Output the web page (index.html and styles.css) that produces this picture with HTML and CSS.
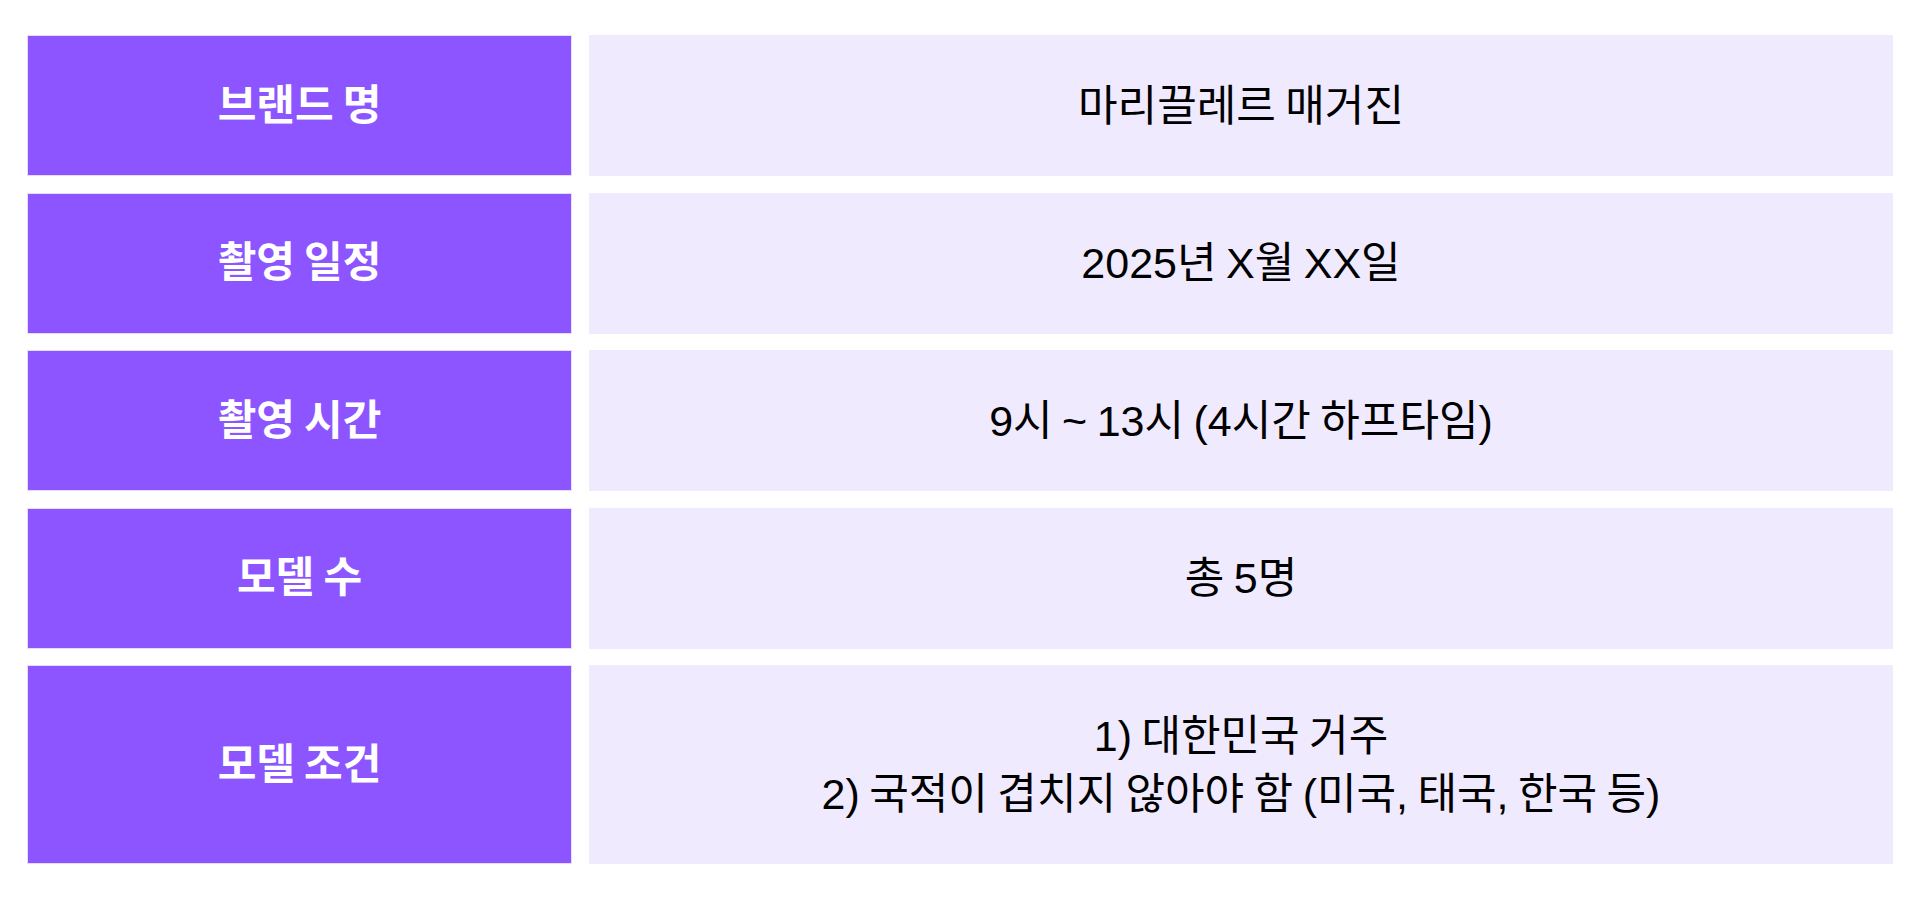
FILE: index.html
```html
<!DOCTYPE html>
<html lang="ko">
<head>
<meta charset="utf-8">
<title>촬영 정보</title>
<link rel="stylesheet" href="styles.css">
</head>
<body>
<div class="sheet">
  <div class="label">브랜드 명</div>
  <div class="value">마리끌레르 매거진</div>
  <div class="label">촬영 일정</div>
  <div class="value">2025년 X월 XX일</div>
  <div class="label">촬영 시간</div>
  <div class="value">9시 ~ 13시 (4시간 하프타임)</div>
  <div class="label">모델 수</div>
  <div class="value">총 5명</div>
  <div class="label">모델 조건</div>
  <div class="value">1) 대한민국 거주<br>2) 국적이 겹치지 않아야 함 (미국, 태국, 한국 등)</div>
</div>
</body>
</html>
```

FILE: styles.css
```css
html, body {
  margin: 0;
  padding: 0;
  background: #ffffff;
}
body {
  font-family: "Liberation Sans", "Noto Sans CJK KR", sans-serif;
}
.sheet {
  display: grid;
  grid-template-columns: 545px 1fr;
  column-gap: 17px;
  row-gap: 16.5px;
  padding: 35px 27px 0 27px;
}
.label, .value {
  display: flex;
  align-items: center;
  justify-content: center;
  text-align: center;
  font-size: 43px;
  line-height: 58px;
  word-spacing: -2.5px;
  padding: 40.5px 0;
  border: 1px solid transparent;
}
.label {
  background: #8c55ff;
  border-color: #e6dcfd;
  color: #ffffff;
  font-weight: 700;
  font-size: 42px;
}
.value {
  background: #f0eaff;
  border-color: #f0eaff;
  color: #000000;
}
```
